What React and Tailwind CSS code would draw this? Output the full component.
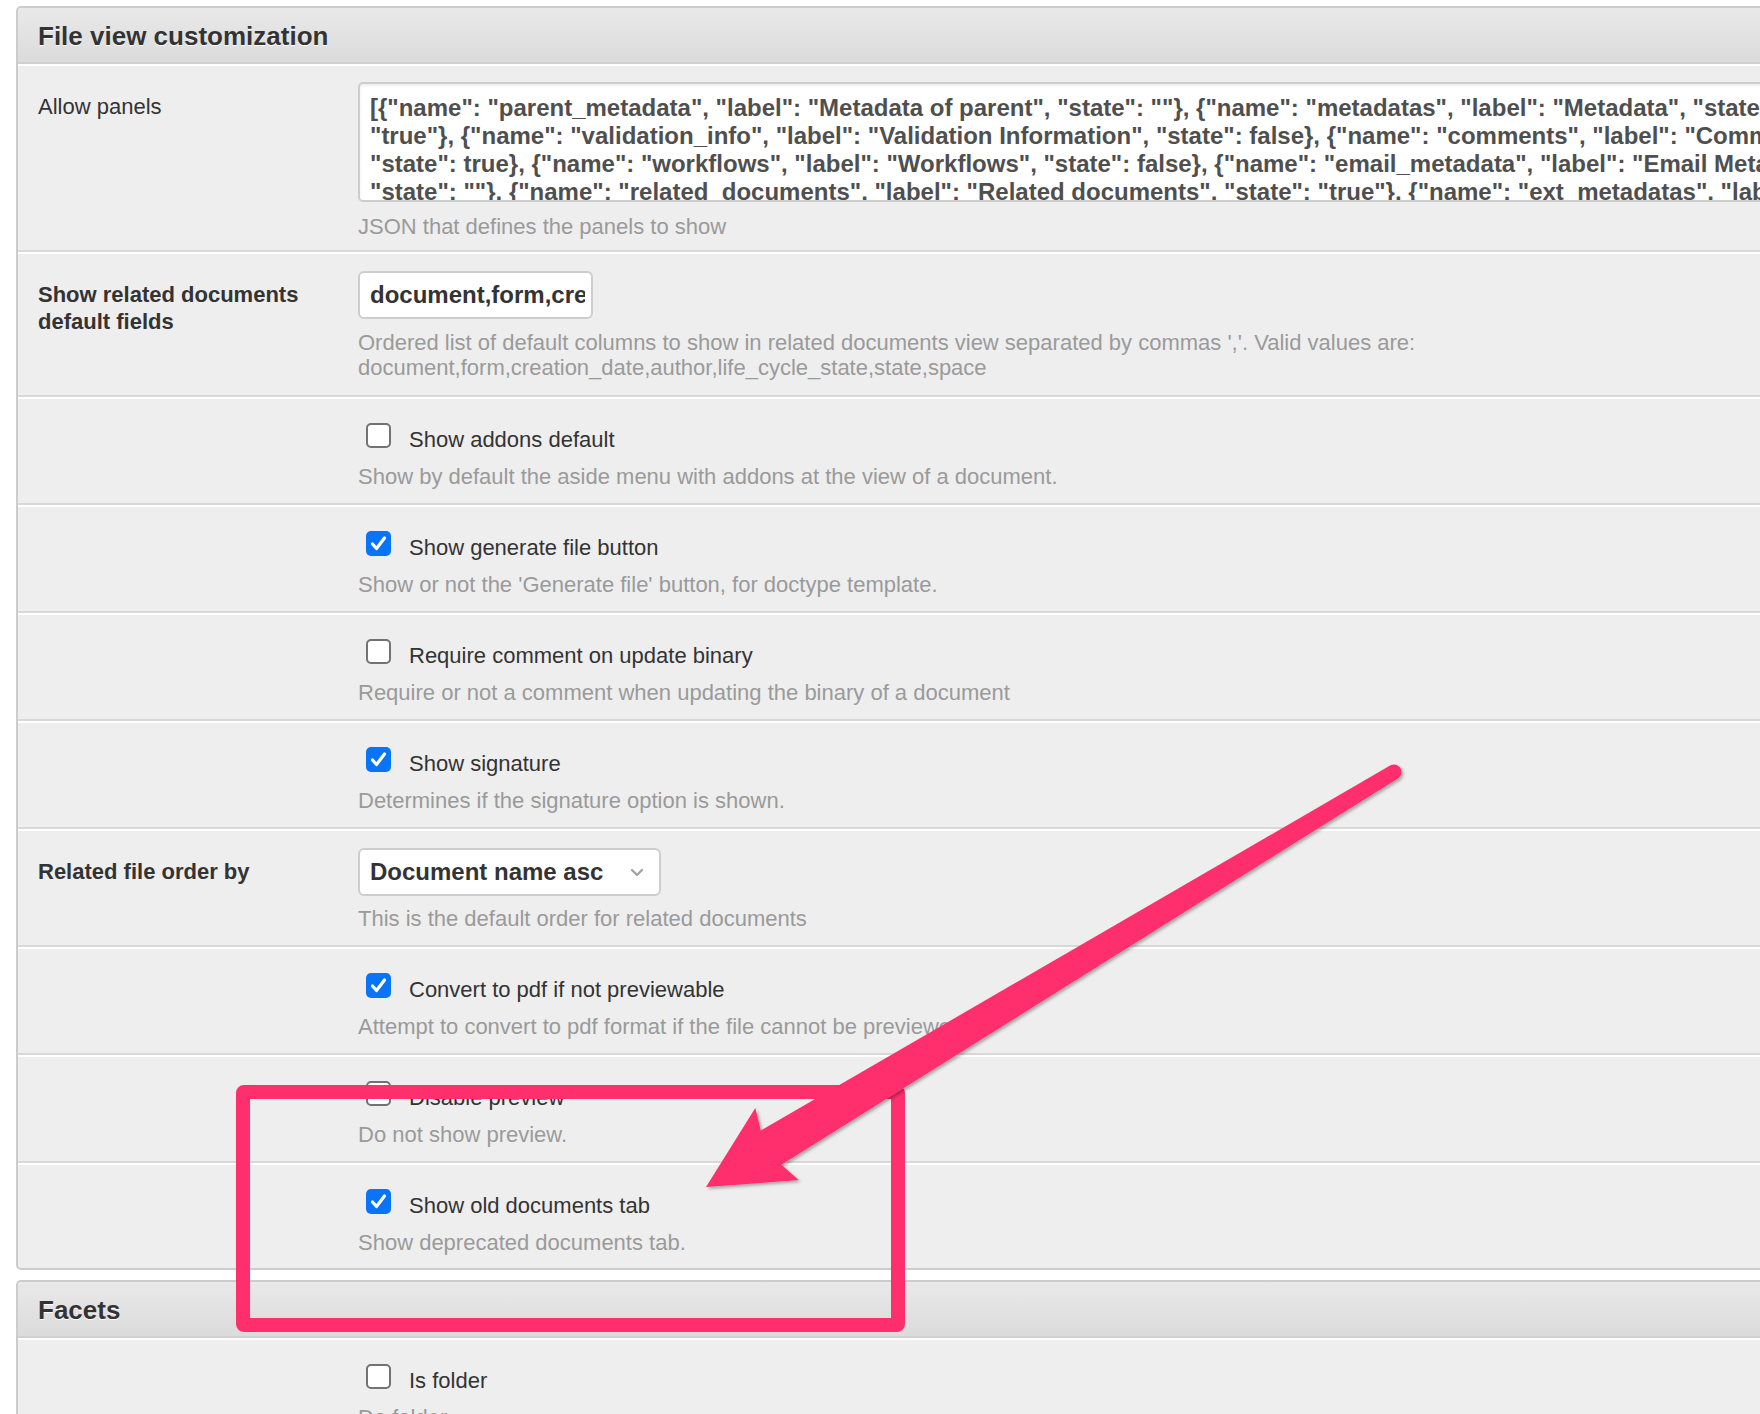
import React from "react";

const PANEL_LINES = [
  '[{"name": "parent_metadata", "label": "Metadata of parent", "state": ""}, {"name": "metadatas", "label": "Metadata", "state": ',
  '"true"}, {"name": "validation_info", "label": "Validation Information", "state": false}, {"name": "comments", "label": "Comments", ',
  '"state": true}, {"name": "workflows", "label": "Workflows", "state": false}, {"name": "email_metadata", "label": "Email Metadata", ',
  '"state": ""}, {"name": "related_documents", "label": "Related documents", "state": "true"}, {"name": "ext_metadatas", "label": "Extra", ',
];

const checkRows = [
  {
    label: "Show addons default",
    help: "Show by default the aside menu with addons at the view of a document.",
    checked: false,
  },
  {
    label: "Show generate file button",
    help: "Show or not the 'Generate file' button, for doctype template.",
    checked: true,
  },
  {
    label: "Require comment on update binary",
    help: "Require or not a comment when updating the binary of a document",
    checked: false,
  },
  {
    label: "Show signature",
    help: "Determines if the signature option is shown.",
    checked: true,
  },
];

const lowerRows = [
  {
    label: "Convert to pdf if not previewable",
    help: "Attempt to convert to pdf format if the file cannot be previewed.",
    checked: true,
  },
  {
    label: "Disable preview",
    help: "Do not show preview.",
    checked: false,
  },
  {
    label: "Show old documents tab",
    help: "Show deprecated documents tab.",
    checked: true,
    last: true,
  },
];

function Box({ checked }) {
  if (checked) {
    return (
      <div className="w-[25px] h-[25px] shrink-0 rounded-[5px] bg-[#0a74f6] flex items-center justify-center">
        <svg width="25" height="25" viewBox="0 0 25 25">
          <path
            d="M6.5 13 L10.5 17.5 L18.5 7"
            fill="none"
            stroke="#fff"
            strokeWidth="3.2"
            strokeLinecap="round"
            strokeLinejoin="round"
          />
        </svg>
      </div>
    );
  }
  return (
    <div className="w-[25px] h-[25px] shrink-0 rounded-[5px] border-2 border-[#727272] bg-white" />
  );
}

function Row({ label, bold = true, last, children }) {
  return (
    <div
      className={`flex border-t-2 border-t-white ${
        last ? "" : "border-b-2 border-b-[#d8d8d8]"
      }`}
    >
      <div className="w-[340px] shrink-0 pl-[20px] pr-[20px] pt-[27px]">
        {label && (
          <p
            className={`text-[22px] leading-[27px] text-[#333] ${
              bold ? "font-bold" : ""
            }`}
          >
            {label}
          </p>
        )}
      </div>
      <div className="flex-1 min-w-0">{children}</div>
    </div>
  );
}

function Help({ children, className = "" }) {
  return (
    <p className={`text-[22px] leading-[26px] text-[#9a9a9a] ${className}`}>
      {children}
    </p>
  );
}

function CheckRow({ label, help, checked, last, pb = "pb-[13px]" }) {
  return (
    <Row last={last}>
      <div className={`pt-[24px] ${pb}`}>
        <div className="flex items-start pl-[8px]">
          <Box checked={checked} />
          <span className="ml-[18px] text-[22px] leading-[34px] text-[#333]">
            {label}
          </span>
        </div>
        <Help className="mt-[7px]">{help}</Help>
      </div>
    </Row>
  );
}

function PanelHeader({ title }) {
  return (
    <div className="h-[56px] border-b-2 border-b-[#d0d0d0] bg-linear-to-b from-[#e9e9e9] to-[#dbdbdb] pl-[20px] pt-[2px] flex items-center">
      <h2 className="text-[26px] font-bold text-[#333] [text-shadow:0_1px_0_#fff]">
        {title}
      </h2>
    </div>
  );
}

export default function App() {
  return (
    <div className="relative w-[1760px] h-[1414px] overflow-hidden bg-white font-['Liberation_Sans',Arial,sans-serif]">
      {/* File view customization */}
      <div className="mt-[6px] ml-[16px] w-[1800px] border-2 border-[#cccccc] rounded-[5px] bg-[#eeeeee] overflow-hidden">
        <PanelHeader title="File view customization" />

        <Row label="Allow panels" bold={false}>
          <div className="pt-[16px] pb-[10px]">
            <div className="h-[120px] border-2 border-[#cdcdcd] rounded-[5px] bg-white pl-[10px] pt-[10px] overflow-hidden shadow-[inset_0_2px_3px_rgba(0,0,0,0.07)] text-[24px] font-bold leading-[28px] text-[#4f4f4f]">
              {PANEL_LINES.map((l, i) => (
                <div key={i} className="whitespace-pre">
                  {l}
                </div>
              ))}
            </div>
            <Help className="mt-[12px]">JSON that defines the panels to show</Help>
          </div>
        </Row>

        <Row label="Show related documents default fields">
          <div className="pt-[17px] pb-[15px]">
            <div className="w-[235px] h-[48px] border-2 border-[#cdcdcd] rounded-[6px] bg-white pl-[10px] pr-[6px] flex items-center">
              <div className="overflow-hidden whitespace-nowrap text-[24px] font-bold text-[#333]">
                document,form,creation_date,author,life_cycle_state,state,space
              </div>
            </div>
            <p className="mt-[11px] text-[22px] leading-[25px] text-[#9a9a9a]">
              Ordered list of default columns to show in related documents view
              separated by commas ','. Valid values are:
              <br />
              document,form,creation_date,author,life_cycle_state,state,space
            </p>
          </div>
        </Row>

        {checkRows.map((r) => (
          <CheckRow key={r.label} {...r} />
        ))}

        <Row label="Related file order by">
          <div className="pt-[17px] pb-[13px]">
            <div className="w-[303px] h-[48px] border-2 border-[#cdcdcd] rounded-[6px] bg-white pl-[10px] pr-[15px] flex items-center justify-between">
              <span className="text-[24px] font-bold text-[#333]">
                Document name asc
              </span>
              <svg width="14" height="9" viewBox="0 0 14 9">
                <path
                  d="M2 2 L7 7 L12 2"
                  fill="none"
                  stroke="#a3a3a3"
                  strokeWidth="2.4"
                  strokeLinecap="round"
                  strokeLinejoin="round"
                />
              </svg>
            </div>
            <Help className="mt-[10px]">
              This is the default order for related documents
            </Help>
          </div>
        </Row>

        {lowerRows.map((r) => (
          <CheckRow
            key={r.label}
            {...r}
            pb={r.last ? "pb-[12px]" : "pb-[13px]"}
          />
        ))}
      </div>

      {/* Facets */}
      <div className="mt-[10px] ml-[16px] w-[1800px] border-2 border-[#cccccc] rounded-[5px] bg-[#eeeeee] overflow-hidden">
        <PanelHeader title="Facets" />
        <CheckRow label="Is folder" help="Do folder" checked={false} last />
      </div>

      {/* annotation */}
      <svg
        className="absolute top-0 left-0 pointer-events-none"
        width="1760"
        height="1414"
        viewBox="0 0 1760 1414"
      >
        <defs>
          <filter id="shadow" x="-10%" y="-10%" width="120%" height="120%">
            <feDropShadow
              dx="2"
              dy="2"
              stdDeviation="1.5"
              floodColor="#000"
              floodOpacity="0.3"
            />
          </filter>
        </defs>
        <rect
          x="243"
          y="1092"
          width="655"
          height="233"
          rx="1"
          fill="none"
          stroke="#ff2f6d"
          strokeWidth="14"
        />
        <g filter="url(#shadow)">
          <polygon
            points="706,1187 798.7,1180.1 781.4,1164.8 1397.9,778.4 1390.1,765.6 760.8,1130.6 755.3,1108.1"
            fill="#ff2f6d"
          />
          <circle cx="1394" cy="772" r="7.5" fill="#ff2f6d" />
        </g>
      </svg>
    </div>
  );
}
